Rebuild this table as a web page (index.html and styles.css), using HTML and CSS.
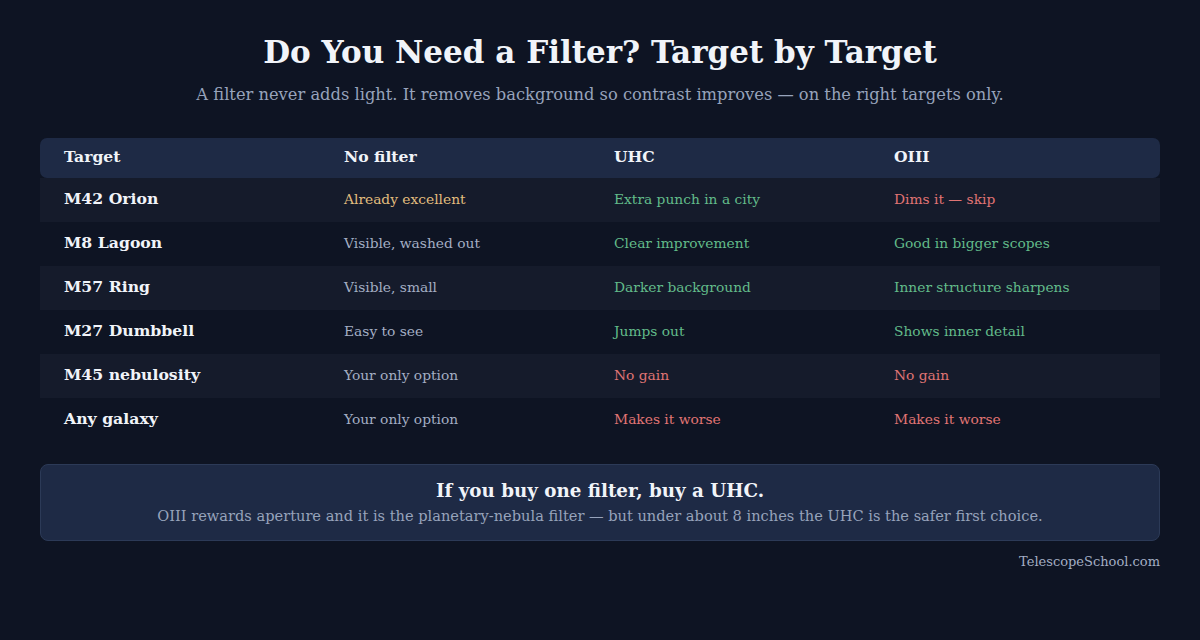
FILE: index.html
```html
<!DOCTYPE html>
<html lang="en">
<head>
<meta charset="utf-8">
<title>Do You Need a Filter?</title>
<link rel="stylesheet" href="styles.css">
</head>
<body>
<main class="page">
  <header class="head">
    <h1 class="title">Do You Need a Filter? Target by Target</h1>
    <p class="subtitle">A filter never adds light. It removes background so contrast improves — on the right targets only.</p>
  </header>
  <table class="grid">
    <colgroup><col class="c1"><col class="c2"><col class="c3"><col class="c4"></colgroup>
    <thead>
      <tr><th>Target</th><th>No filter</th><th>UHC</th><th>OIII</th></tr>
    </thead>
    <tbody>
      <tr><td class="tgt">M42 Orion</td><td class="gold">Already excellent</td><td class="good">Extra punch in a city</td><td class="bad">Dims it — skip</td></tr>
      <tr><td class="tgt">M8 Lagoon</td><td class="muted">Visible, washed out</td><td class="good">Clear improvement</td><td class="good">Good in bigger scopes</td></tr>
      <tr><td class="tgt">M57 Ring</td><td class="muted">Visible, small</td><td class="good">Darker background</td><td class="good">Inner structure sharpens</td></tr>
      <tr><td class="tgt">M27 Dumbbell</td><td class="muted">Easy to see</td><td class="good">Jumps out</td><td class="good">Shows inner detail</td></tr>
      <tr><td class="tgt">M45 nebulosity</td><td class="muted">Your only option</td><td class="bad">No gain</td><td class="bad">No gain</td></tr>
      <tr><td class="tgt">Any galaxy</td><td class="muted">Your only option</td><td class="bad">Makes it worse</td><td class="bad">Makes it worse</td></tr>
    </tbody>
  </table>
  <section class="callout">
    <h2 class="callout-title">If you buy one filter, buy a UHC.</h2>
    <p class="callout-text">OIII rewards aperture and it is the planetary-nebula filter — but under about 8 inches the UHC is the safer first choice.</p>
  </section>
  <footer class="credit">TelescopeSchool.com</footer>
</main>
</body>
</html>
```
FILE: styles.css
```css
html, body {
  margin: 0;
  padding: 0;
  background: #0e1423;
}
body {
  font-family: Georgia, "DejaVu Serif", serif;
  color: #e8ecf3;
  width: 1200px;
  height: 640px;
  overflow: hidden;
}
.page {
  padding: 32px 40px 0;
  display: flex;
  flex-direction: column;
}
.head {
  text-align: center;
}
.title {
  margin: 0;
  font-size: 31px;
  line-height: 40px;
  font-weight: 700;
  color: #f1f4f9;
}
.subtitle {
  margin: 11px 0 0;
  font-size: 16.3px;
  line-height: 24px;
  color: #97a3bb;
}
.grid {
  margin-top: 31px;
  width: 1120px;
  border-collapse: separate;
  border-spacing: 0;
  table-layout: fixed;
}
.c1 { width: 280px; }
.c2 { width: 270px; }
.c3 { width: 280px; }
.c4 { width: 290px; }
.grid th {
  background: #1e2a45;
  text-align: left;
  font-size: 15.6px;
  font-weight: 700;
  color: #f1f4f9;
  height: 40px;
  padding: 0 0 3px 24px;
  box-sizing: border-box;
}
.grid th:first-child { border-radius: 7px 0 0 7px; }
.grid th:last-child { border-radius: 0 7px 7px 0; }
.grid td {
  height: 44px;
  padding: 0 0 3px 24px;
  box-sizing: border-box;
  font-size: 13.8px;
}
.grid tbody tr:nth-child(odd) td { background: #151b2b; }
.grid td.tgt {
  font-weight: 700;
  font-size: 15.7px;
  color: #f1f4f9;
}
.gold { color: #e2bd7e; }
.good { color: #62bb8a; }
.bad { color: #e07474; }
.muted { color: #a3aec3; }
.callout {
  margin-top: 22px;
  background: #1e2a45;
  border: 1px solid #2c3a57;
  border-radius: 8px;
  padding: 13px 20px 13px;
  text-align: center;
}
.callout-title {
  margin: 0;
  font-size: 18.3px;
  line-height: 26px;
  font-weight: 700;
  color: #f1f4f9;
}
.callout-text {
  margin: 1px 0 0;
  font-size: 14.6px;
  line-height: 22px;
  color: #97a3bb;
}
.credit {
  margin-top: 13px;
  text-align: right;
  font-size: 13px;
  color: #a3aec3;
}
```
